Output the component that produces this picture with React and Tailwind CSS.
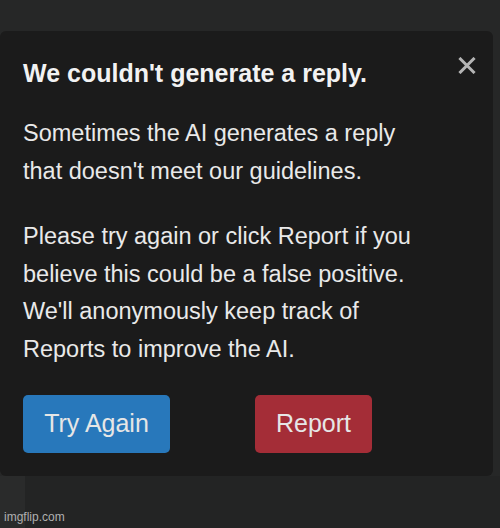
const font = { fontFamily: '"Liberation Sans", Arial, sans-serif' }

const CloseIcon = () => (
  <svg width="18" height="17" viewBox="0 0 18 17" className="text-[#b4b4b4]">
    <path d="M2.5 2 L15.5 15 M15.5 2 L2.5 15" stroke="currentColor" strokeWidth="3" strokeLinecap="square" />
  </svg>
)

export default function App() {
  return (
    <div className="relative flex h-[528px] w-[500px] flex-col bg-[#262727]" style={font}>
      <div className="h-[31px] shrink-0" />

      <div className="mr-[7px] rounded-md bg-[#1b1b1b] pb-[23px] pl-[23px] pr-[17px] pt-[29px]">
        <div className="flex items-start justify-between">
          <h2 className="text-[25px] font-bold leading-[26px] text-[#f2f2f2]">We couldn't generate a reply.</h2>
          <button type="button" aria-label="Close" className="mt-[-3px]">
            <CloseIcon />
          </button>
        </div>

        <p className="mt-[29px] whitespace-nowrap text-[23.5px] leading-[37.5px] text-[#e9e9e9]">
          Sometimes the AI generates a reply
          <br />
          that doesn't meet our guidelines.
        </p>

        <p className="mt-[28px] whitespace-nowrap text-[23.5px] leading-[37.5px] text-[#e9e9e9]">
          Please try again or click Report if you
          <br />
          believe this could be a false positive.
          <br />
          We'll anonymously keep track of
          <br />
          Reports to improve the AI.
        </p>

        <div className="mt-[27px] flex gap-[85px]">
          <button
            type="button"
            className="h-[58px] w-[147px] rounded-[5px] bg-[#2878bb] text-[25px] text-[#e6e6e6]"
          >
            Try Again
          </button>
          <button
            type="button"
            className="h-[58px] w-[117px] rounded-[5px] bg-[#a42d37] text-[25px] text-[#e6e6e6]"
          >
            Report
          </button>
        </div>
      </div>

      <div className="flex flex-1">
        <div className="w-[25px] bg-[#2a2b2b]" />
        <div className="flex-1 bg-[#232424]" />
      </div>

      <span className="absolute bottom-[2px] left-[4px] text-[12px] text-[#b0b0b0]">imgflip.com</span>
    </div>
  )
}
